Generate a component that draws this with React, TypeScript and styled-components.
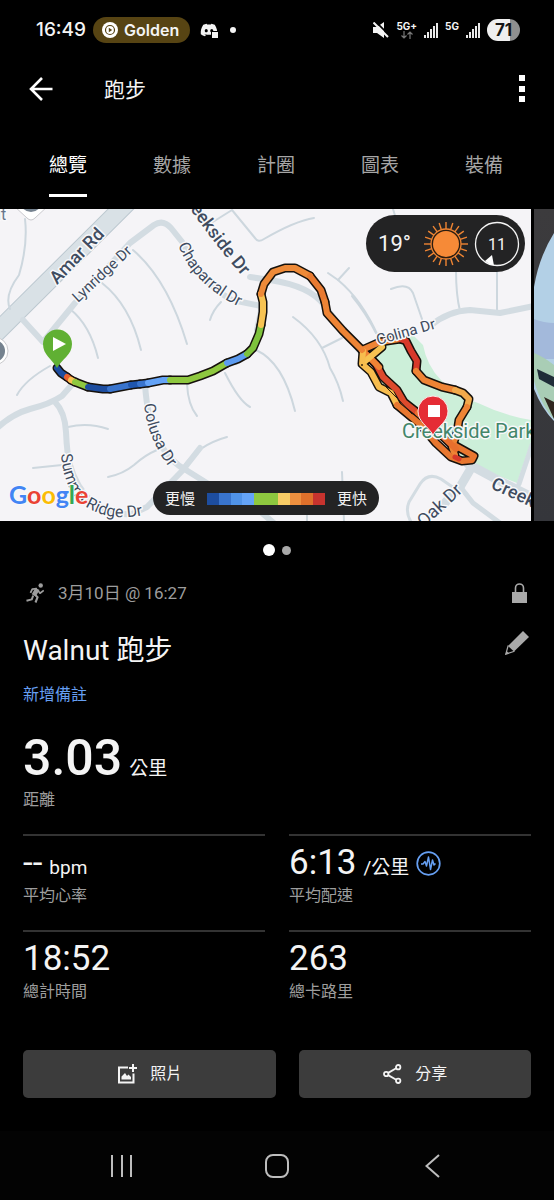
import React from "react";
import styled, { createGlobalStyle } from "styled-components";
import { FaDiscord } from "react-icons/fa";

const GlobalStyle = createGlobalStyle`
  *, *::before, *::after { box-sizing: border-box; }
  body {
    margin: 0;
    background: #000;
    color: #f4f4f4;
    font-family: Roboto, "Noto Sans CJK TC", sans-serif;
  }
  button { font-family: inherit; }
`;

const Page = styled.div`
  min-height: 100vh;
  display: flex;
  flex-direction: column;
  background: #000;
`;

/* Status bar */
const StatusBar = styled.div`
  height: 60px;
  padding: 0 34px 0 36px;
  display: flex;
  align-items: center;
  justify-content: space-between;
  font-family: Inter, sans-serif;
`;
const StatusGroup = styled.div<{ $gap: number }>`
  display: flex;
  align-items: center;
  gap: ${(p) => p.$gap}px;
`;
const Clock = styled.span`
  font-size: 19px;
  font-weight: 500;
  line-height: 24px;
`;
const NowPill = styled.span`
  height: 26px;
  padding: 0 11px 0 9px;
  margin-right: 3px;
  display: flex;
  align-items: center;
  gap: 6px;
  border-radius: 13px;
  background: #574413;
  font-size: 16px;
  font-weight: 600;
`;
const NoticeIcon = styled.span`
  position: relative;
  display: flex;
  margin-right: 5px;
`;
const NoticeBadge = styled.span`
  position: absolute;
  right: -1px;
  bottom: 0;
  width: 8px;
  height: 8px;
  background: #f4f4f4;
  border: 1px solid #000;
`;
const Dot = styled.span<{ $size: number; $color: string }>`
  width: ${(p) => p.$size}px;
  height: ${(p) => p.$size}px;
  border-radius: 50%;
  background: ${(p) => p.$color};
`;
const Network = styled.span`
  height: 18px;
  display: flex;
  flex-direction: column;
  align-items: center;
  font-size: 10px;
  line-height: 10px;
  font-weight: 700;
`;
const Battery = styled.span`
  width: 33px;
  height: 22px;
  display: flex;
  align-items: center;
  justify-content: center;
  border-radius: 11px;
  background: linear-gradient(90deg, #efefef 71%, #8f8f8f 71%);
  color: #151515;
  font-size: 17px;
  font-weight: 700;
`;

/* Header and tabs */
const Header = styled.header`
  height: 58px;
  padding: 0 22px 0 23px;
  display: flex;
  align-items: center;
`;
const IconButton = styled.button`
  padding: 0;
  border: 0;
  background: none;
  color: inherit;
  display: flex;
  align-items: center;
  justify-content: center;
  cursor: pointer;
`;
const BackButton = styled(IconButton)`
  width: 36px;
  height: 40px;
`;
const MenuButton = styled(IconButton)`
  width: 20px;
  height: 40px;
`;
const ScreenTitle = styled.h1`
  margin: 0 0 0 45px;
  padding-top: 2px;
  flex: 1;
  font-size: 21px;
  line-height: 30px;
  font-weight: 400;
`;
const Tabs = styled.nav`
  height: 91px;
  padding: 12px 18px 12px 16px;
  display: flex;
  justify-content: space-around;
`;
const TabCell = styled.div`
  flex: 1;
  display: flex;
  justify-content: center;
`;
const Tab = styled.button<{ $active?: boolean }>`
  padding: 7px 0 0;
  border: 0;
  border-bottom: 3px solid ${(p) => (p.$active ? "#fff" : "transparent")};
  background: none;
  color: ${(p) => (p.$active ? "#fff" : "#a6a6a6")};
  font-size: 19px;
  line-height: 28px;
  cursor: pointer;
`;

/* Carousel */
const Carousel = styled.div`
  height: 312px;
  display: flex;
  gap: 3px;
  overflow: hidden;
`;
const MapSlide = styled.div`
  position: relative;
  flex: 1;
  min-width: 0;
  background: #f5f4f7;
  & > svg { display: block; }
`;
const PhotoSlide = styled.div`
  flex: 0 0 20px;
  & > svg { display: block; }
`;
const WeatherPill = styled.div`
  position: absolute;
  top: 6px;
  right: 6px;
  height: 57px;
  padding: 0 5px 0 12px;
  display: flex;
  align-items: center;
  border-radius: 29px;
  background: #232324;
  font-size: 22px;
  gap: 12px;
`;
const WeatherIcons = styled.div`
  display: flex;
  align-items: center;
  gap: 5px;
`;
const PaceLegend = styled.div`
  position: absolute;
  left: 153px;
  bottom: 6px;
  height: 34px;
  padding: 2px 12px 0;
  display: flex;
  align-items: center;
  gap: 12px;
  border-radius: 17px;
  background: #232324;
  font-size: 15px;
  line-height: 20px;
`;
const Scale = styled.div`
  width: 118px;
  height: 12px;
  display: flex;
`;
const ScaleStep = styled.span<{ $color: string }>`
  flex: 1;
  background: ${(p) => p.$color};
`;
const Pager = styled.div`
  height: 58px;
  display: flex;
  align-items: center;
  justify-content: center;
  gap: 7px;
`;

/* Summary */
const Summary = styled.main`
  padding: 0 23px;
`;
const Row = styled.div`
  display: flex;
  justify-content: space-between;
`;
const DateRow = styled(Row)`
  height: 28px;
  padding: 0 4px 0 3px;
  align-items: center;
  color: #9d9d9d;
`;
const DateLabel = styled.span`
  display: flex;
  align-items: center;
  gap: 14px;
  font-size: 17px;
  line-height: 28px;
`;
const TitleRow = styled(Row)`
  margin-top: 24px;
  padding-right: 2px;
  align-items: flex-start;
  color: #a9a9a9;
`;
const ActivityTitle = styled.h2`
  margin: 0;
  color: #f4f4f4;
  font-size: 28px;
  line-height: 40px;
  font-weight: 400;
`;
const NoteLink = styled.a`
  display: block;
  width: fit-content;
  margin-top: 12px;
  color: #669ff2;
  font-size: 16px;
  line-height: 24px;
  text-decoration: none;
`;
const Distance = styled.div`
  margin-top: 21px;
`;
const Value = styled.div<{ $large?: boolean }>`
  height: ${(p) => (p.$large ? 60 : 46)}px;
  display: flex;
  align-items: baseline;
  gap: 7px;
  font-size: ${(p) => (p.$large ? 50 : 35)}px;
  line-height: ${(p) => (p.$large ? 60 : 46)}px;
  font-weight: ${(p) => (p.$large ? 500 : 400)};
`;
const Unit = styled.span`
  font-size: 19px;
  line-height: 24px;
  font-weight: 400;
`;
const PaceBadge = styled.span`
  align-self: center;
  display: flex;
`;
const Label = styled.div<{ $tall?: boolean }>`
  color: #9d9d9d;
  font-size: 16px;
  line-height: ${(p) => (p.$tall ? 24 : 20)}px;
`;
const Stats = styled.div`
  margin-top: 22px;
  display: grid;
  grid-template-columns: 1fr 1fr;
  column-gap: 24px;
`;
const Stat = styled.div`
  padding: 4px 0 24px;
  border-top: 2px solid #333;
`;
const Actions = styled.div`
  margin: 24px 0;
  display: flex;
  gap: 23px;
`;
const ActionButton = styled.button<{ $grow: number }>`
  flex: ${(p) => p.$grow} 1 0;
  height: 48px;
  border: 0;
  border-radius: 5px;
  background: #3c3c3c;
  color: #f4f4f4;
  display: flex;
  align-items: center;
  justify-content: center;
  gap: 13px;
  font-size: 16px;
  line-height: 24px;
  cursor: pointer;
`;
const SystemNav = styled.div`
  margin-top: auto;
  height: 69px;
  padding: 0 44px;
  display: flex;
  align-items: center;
  background: #030303;
  color: #bdbdbd;
`;
const NavButton = styled(IconButton)`
  flex: 1;
  height: 48px;
`;

const paceColors = [
  "#1d4d9f", "#3974cd", "#5093e8", "#64a3f7", "#8ec83f",
  "#8ec83f", "#f8cc66", "#ee903f", "#df702b", "#c7332e",
];

const wideRoads = [
  "M-4 429Q12 414 30 409Q50 404 62 396L76 380",
  "M55 402Q65 412 66 432Q67 455 70 465Q76 487 92 502Q112 516 132 514L147 507L182 471L200 448",
  "M145 384Q147 418 158 440Q170 462 186 470L210 485L250 503L275 524",
  "M23 320L43 342L75 303L130 243L154 225Q163 219 171 228L183 243Q196 280 232 300L261 306",
  "M250 277L270 280Q310 286 324 305L340 326L362 354",
  "M262 306Q260 350 236 362",
  "M262 306L257 330",
];

const thinRoads = [
  "M25 219Q28 245 19 275Q4 295 10 309",
  "M70 309Q90 325 98 358",
  "M102 283Q130 305 141 350",
  "M133 250Q168 280 187 344",
  "M208 225L232 210L255 238Q258 243 264 239Q295 221 314 218",
  "M210 320Q213 310 221 302",
  "M328 273L338 280Q362 300 378 336",
  "M338 280L349 268",
  "M293 317Q322 338 330 368Q339 383 343 401",
  "M322 348L342 338",
  "M256 350Q283 362 295 411",
  "M225 373Q239 401 250 407",
  "M187 384Q188 405 197 416",
  "M227 437Q198 445 183 467",
  "M342 472L344 521",
  "M307 515V522",
  "M50 366Q25 380 17 395",
  "M68 427Q88 422 108 429",
  "M33 468L62 465",
  "M108 477Q123 474 134 465Q145 455 157 450",
  "M456 270Q456 295 460 311",
  "M497 270V312",
  "M391 289Q408 282 413 293L422 319",
  "M393 209L397 222",
  "M352 296Q366 313 376 333",
];

type Segment = { d: string; color: string };

const route: Segment[] = [
  { d: "M363 351L376 364L383 377L397 390L404 402L418 413", color: "#dd4a2c" },
  { d: "M363 351L379 367", color: "#ee8435" },
  { d: "M362 350L380 342L400 339", color: "#ee8435" },
  { d: "M363 363L382 347", color: "#f7c352" },
  { d: "M400 339L406 341L411 351L417 361L416 371", color: "#d7392a" },
  { d: "M416 371L424 380L442 387L455 390", color: "#ee8435" },
  { d: "M455 390L463 393L469 399L467 407", color: "#f2aa4b" },
  { d: "M467 407L459 420L457 433L452 447L455 455", color: "#ee8435" },
  { d: "M363 351L362 364L371 372L379 387L391 393L397 405", color: "#f7bd4e" },
  { d: "M397 405L421 425L436 443L451 457L462 461L472 460L474 456L465 451L456 446", color: "#e8772f" },
  { d: "M418 413L434 428L456 449", color: "#e86f2d" },
  { d: "M57 368L61 373L67 377", color: "#1d4d9f" },
  { d: "M67 377L71 380", color: "#e8602d" },
  { d: "M71 380L75 382", color: "#f7c352" },
  { d: "M75 382L88 387", color: "#8ec83f" },
  { d: "M88 387L103 389L110 389", color: "#1d4d9f" },
  { d: "M110 389L131 385", color: "#3974cd" },
  { d: "M131 385L140 384", color: "#1f56ae" },
  { d: "M140 384L148 383", color: "#3974cd" },
  { d: "M148 383L163 380L170 380", color: "#64a3f7" },
  { d: "M170 380L188 380L200 376L213 371L227 363", color: "#8ec83f" },
  { d: "M227 363L238 359L247 354", color: "#5c9bf0" },
  { d: "M247 354L253 348L259 334L261 325", color: "#7ec23c" },
  { d: "M261 325L263 312L263 302L261 294", color: "#f7c352" },
  { d: "M261 294L264 284L273 272L285 268L295 268L310 276", color: "#ee8a38" },
  { d: "M310 276L321 290L325 302", color: "#e87a31" },
  { d: "M325 302L327 313L343 331L362 350", color: "#ee8435" },
];

function RouteMap() {
  return (
    <svg width="100%" height="312" viewBox="0 209 531 312" preserveAspectRatio="xMidYMid slice" role="img" aria-label="路線地圖">
      <defs>
        <path id="creek-top" d="M168 176Q204 232 242 276" />
        <path id="chaparral" d="M178 245Q194 287 246 310" />
        <path id="colusa" d="M144 404Q147 440 174 474" />
        <path id="summit" d="M61 452C62 478 72 500 90 509Q115 524 156 512" />
        <path id="creek-bottom" d="M490 488L600 539" />
      </defs>
      <rect y="209" width="531" height="312" fill="#f5f4f7" />
      <path d="M366 352L388 342L412 334L423 345Q427 366 441 380Q456 397 478 403Q505 416 531 420V442L517 483L474 466L440 440L385 390Z" fill="#ccefd9" />
      <g fill="none" strokeLinecap="round" strokeLinejoin="round">
        <path d="M-10 339L135 195" stroke="#bcc8d0" strokeWidth="19" />
        <path d="M-10 339L135 195" stroke="#d9e1e6" strokeWidth="17" />
        <g stroke="#cdd7de" strokeWidth="2">
          {thinRoads.map((d) => <path key={d} d={d} />)}
        </g>
        <g stroke="#d3dce2" strokeWidth="6">
          {wideRoads.map((d) => <path key={d} d={d} />)}
          <path d="M430 326Q448 311 470 310L500 313L534 306" />
        </g>
        <path d="M468 464L494 478L534 498" stroke="#d3dce2" strokeWidth="9" />
        <path d="M470 470L460 487L440 508" stroke="#d3dce2" strokeWidth="9" />
        <path d="M462 489L473 503L500 523" stroke="#d3dce2" strokeWidth="5" />
        <path d="M532 445L519 484" stroke="#d3dce2" strokeWidth="5" />
        <path d="M454 488L441 479Q428 472 420 484L409 502Q405 512 411 522" stroke="#d3dce2" strokeWidth="3" />
      </g>

      <g fill="#3f4c60" stroke="#f8f8fa" strokeWidth="3" strokeLinejoin="round" paintOrder="stroke" fontFamily="Roboto, sans-serif">
        <text x="0" y="0" transform="translate(57 285) rotate(-46)" fontSize="18" fontWeight="500">Amar Rd</text>
        <text x="0" y="0" transform="translate(78 303) rotate(-43)" fontSize="15">Lynridge Dr</text>
        <text fontSize="18" fontWeight="500"><textPath href="#creek-top" startOffset="100%" textAnchor="end">Creekside Dr</textPath></text>
        <text fontSize="16"><textPath href="#chaparral">Chaparral Dr</textPath></text>
        <text fontSize="16"><textPath href="#colusa">Colusa Dr</textPath></text>
        <text fontSize="16"><textPath href="#summit" startOffset="2">Summit Ridge Dr</textPath></text>
        <text fontSize="18" fontWeight="500"><textPath href="#creek-bottom">Creekside Dr</textPath></text>
        <text x="0" y="0" transform="translate(424 528) rotate(-43)" fontSize="18">Oak Dr</text>
        <text x="-3" y="220" fontSize="16" fill="#66758a">it</text>
      </g>

      <g fill="none" strokeLinecap="round" strokeLinejoin="round">
        <g stroke="#16110c" strokeWidth="9">
          {route.map((s) => <path key={s.d} d={s.d} />)}
        </g>
        <g strokeWidth="6">
          {route.map((s) => <path key={s.d} d={s.d} stroke={s.color} />)}
        </g>
        <path d="M455 457L459 459" stroke="#d7392a" strokeWidth="5" />
        <path d="M384 385L397 398L412 414" stroke="#2a1a10" strokeWidth="1" />
      </g>
      <circle cx="362" cy="365" r="1" fill="#3b2a10" />

      <g stroke="#f8f8fa" strokeWidth="3" strokeLinejoin="round" paintOrder="stroke" fontFamily="Roboto, sans-serif">
        <text x="0" y="0" transform="translate(378 345) rotate(-16)" fontSize="15" fill="#3f4c60">Colina Dr</text>
        <text x="402" y="438" fontSize="20" fill="#43866a">Creekside Park</text>
      </g>

      <path d="M13 205L27 218Q31 222 35 218L49 205Z" fill="#fff" stroke="#c9c9cd" />
      <circle cx="31" cy="201" r="11" fill="#75828f" />
      <circle cx="-6" cy="351" r="14" fill="#fff" stroke="#c9c9cd" />
      <circle cx="-6" cy="351" r="11" fill="#75828f" />

      <path d="M57 368C52 359 43 355 43 344A14 14 0 0 1 72 344C72 355 62 359 57 368Z" fill="#60b033" />
      <path d="M53 337L66 344L53 351Z" fill="#fff" />
      <path d="M433 435C428 426 418 422 418 411A15 15 0 0 1 448 411C448 422 438 426 433 435Z" fill="#e52c35" stroke="#fbe9e9" strokeWidth="1" />
      <rect x="428" y="405" width="12" height="12" fill="#fff" />

      <text x="9" y="504" fontFamily="Lato, sans-serif" fontSize="25" fontWeight="700" stroke="#f8f8fa" strokeWidth="2" paintOrder="stroke">
        <tspan fill="#4285f4">G</tspan>
        <tspan fill="#ea4335">o</tspan>
        <tspan fill="#fbbc05">o</tspan>
        <tspan fill="#4285f4">g</tspan>
        <tspan fill="#34a853">l</tspan>
        <tspan fill="#ea4335">e</tspan>
      </text>
    </svg>
  );
}

function PhotoPeek() {
  return (
    <svg width="20" height="312" viewBox="0 0 20 312" aria-hidden="true">
      <defs>
        <linearGradient id="wall" x1="0" y1="0" x2="0" y2="1">
          <stop offset="0" stopColor="#3c3b3d" />
          <stop offset="1" stopColor="#35363b" />
        </linearGradient>
      </defs>
      <rect width="20" height="312" fill="url(#wall)" />
      <path d="M20 24Q5 48 0 78V180Q8 200 20 212Z" fill="#b3d0e6" />
      <path d="M0 110Q10 114 20 114V150H0Z" fill="#a3b9db" />
      <path d="M0 144Q10 148 20 156V210Q8 198 0 172Z" fill="#a9cdb5" />
      <path d="M3 160L20 168V178L5 170Z" fill="#1f2c38" />
      <path d="M10 188L20 193V210Z" fill="#30261f" />
    </svg>
  );
}

function SignalBars() {
  return (
    <svg width="14" height="15" viewBox="0 0 14 15" fill="#e8e8e8" aria-hidden="true">
      <rect x="0" y="12" width="2" height="3" />
      <rect x="3" y="9" width="2" height="6" />
      <rect x="6" y="6" width="2" height="9" />
      <rect x="9" y="3" width="2" height="12" />
      <rect x="12" y="0" width="2" height="15" />
    </svg>
  );
}

function Sun() {
  const rays = Array.from({ length: 20 }, (_, i) => i * 18);
  return (
    <svg width="46" height="46" viewBox="-23 -23 46 46" aria-label="晴">
      <g stroke="#ef8533" strokeWidth="1.4">
        {rays.map((a) => <path key={a} d="M0 -15V-22" transform={`rotate(${a})`} />)}
      </g>
      <circle r="15" fill="#2a1c10" stroke="#ef8533" strokeWidth="1.3" />
      <circle r="13" fill="#f68a37" />
    </svg>
  );
}

function Wind() {
  return (
    <svg width="46" height="46" viewBox="-23 -23 46 46" aria-label="風速 11">
      <circle r="21.5" fill="none" stroke="#f4f4f4" strokeWidth="1.3" />
      <path d="M-12 17L-5 11L-3 21.5Q-8 20.500 -12 17Z" fill="#fff" />
      <text y="6" fontSize="16" fill="#f4f4f4" textAnchor="middle" fontFamily="Roboto, sans-serif">11</text>
    </svg>
  );
}

function Runner() {
  return (
    <svg width="18" height="20" viewBox="0 0 18 20" fill="none" stroke="currentColor" strokeLinejoin="round" aria-hidden="true">
      <circle cx="14.700" cy="2.500" r="2.200" fill="currentColor" stroke="none" />
      <path d="M4.500 9.800L6.300 6.200L11 5.600" strokeWidth="1.800" />
      <path d="M11.400 5.800L7.800 12.400" strokeWidth="4.600" />
      <path d="M12 7.500L14 10.200L17.800 7.400" strokeWidth="1.700" />
      <path d="M8.800 11.500L11.600 14.200L9.500 19.500" strokeWidth="2.100" />
      <path d="M7.200 12.500L5.800 16.400L0.500 17.800" strokeWidth="2" />
    </svg>
  );
}

const tabs = ["總覽", "數據", "計圈", "圖表", "裝備"];

export default function App() {
  return (
    <Page>
      <GlobalStyle />
      <StatusBar>
        <StatusGroup $gap={7}>
          <Clock>16:49</Clock>
          <NowPill>
            <svg width="16" height="16" viewBox="0 0 16 16" aria-hidden="true">
              <circle cx="8" cy="8" r="8" fill="#fff" />
              <circle cx="8" cy="8" r="4.500" fill="none" stroke="#574413" strokeWidth="1.200" />
              <path d="M6.800 5.800L10.200 8L6.800 10.200Z" fill="#574413" />
            </svg>
            Golden
          </NowPill>
          <NoticeIcon>
            <FaDiscord size={18} />
            <NoticeBadge />
          </NoticeIcon>
          <Dot $size={6} $color="#f4f4f4" />
        </StatusGroup>
        <StatusGroup $gap={7}>
          <svg width="16" height="17" viewBox="0 0 16 17" aria-label="靜音">
            <path d="M0 5H4L11 0V16L4 11H0Z" fill="#f4f4f4" />
            <path d="M2 -1L17 14" stroke="#000" strokeWidth="1.800" />
            <path d="M0.500 0.500L15 15" stroke="#f4f4f4" strokeWidth="2" />
          </svg>
          <Network>
            5G+
            <svg width="12" height="8" viewBox="0 0 12 8" fill="none" stroke="#777" strokeWidth="1.200" aria-hidden="true">
              <path d="M3 0V7M0.500 4.500L3 7L5.500 4.500M9 8V1M6.500 3.500L9 1L11.500 3.500" />
            </svg>
          </Network>
          <SignalBars />
          <Network>5G</Network>
          <SignalBars />
          <Battery>71</Battery>
        </StatusGroup>
      </StatusBar>

      <Header>
        <BackButton aria-label="返回">
          <svg width="24" height="24" viewBox="0 0 24 24" fill="none" stroke="#fff" strokeWidth="2.600" aria-hidden="true">
            <path d="M23.500 12H2M13 1L2 12L13 23" />
          </svg>
        </BackButton>
        <ScreenTitle>跑步</ScreenTitle>
        <MenuButton aria-label="更多">
          <svg width="6" height="28" viewBox="0 0 6 28" fill="#fff" aria-hidden="true">
            <rect width="6" height="6" y="0" />
            <rect width="6" height="6" y="11" />
            <rect width="6" height="6" y="21" />
          </svg>
        </MenuButton>
      </Header>

      <Tabs>
        {tabs.map((name, i) => (
          <TabCell key={name}>
            <Tab $active={i === 0}>{name}</Tab>
          </TabCell>
        ))}
      </Tabs>

      <Carousel>
        <MapSlide>
          <RouteMap />
          <WeatherPill>
            19°
            <WeatherIcons>
              <Sun />
              <Wind />
            </WeatherIcons>
          </WeatherPill>
          <PaceLegend>
            <span>更慢</span>
            <Scale>
              {paceColors.map((c, i) => <ScaleStep key={i} $color={c} />)}
            </Scale>
            <span>更快</span>
          </PaceLegend>
        </MapSlide>
        <PhotoSlide>
          <PhotoPeek />
        </PhotoSlide>
      </Carousel>
      <Pager>
        <Dot $size={12} $color="#fff" />
        <Dot $size={9} $color="#a9a9a9" />
      </Pager>

      <Summary>
        <DateRow>
          <DateLabel>
            <Runner />
            3月10日 @ 16:27
          </DateLabel>
          <svg width="15" height="20" viewBox="0 0 15 20" aria-label="私人">
            <rect y="9" width="15" height="11" fill="#a9a9a9" />
            <path d="M3.500 9V5A4 4 0 0 1 11.500 5V9" fill="none" stroke="#a9a9a9" strokeWidth="1.600" />
          </svg>
        </DateRow>
        <TitleRow>
          <ActivityTitle>Walnut 跑步</ActivityTitle>
          <IconButton aria-label="編輯">
            <svg width="24" height="24" viewBox="0 0 24 24" fill="currentColor" aria-hidden="true">
              <path d="M18 0L24 6L9 20.500L3 15Z" />
              <path d="M3.200 14.500L0.800 23.200L9.500 20.200" fill="none" stroke="currentColor" strokeWidth="1.200" />
              <path d="M0.500 23.500L1.500 20L4 22.300Z" />
            </svg>
          </IconButton>
        </TitleRow>
        <NoteLink href="#note">新增備註</NoteLink>

        <Distance>
          <Value $large>3.03<Unit>公里</Unit></Value>
          <Label $tall>距離</Label>
        </Distance>

        <Stats>
          <Stat>
            <Value>--<Unit>bpm</Unit></Value>
            <Label>平均心率</Label>
          </Stat>
          <Stat>
            <Value>
              6:13
              <Unit>/公里</Unit>
              <PaceBadge>
                <svg width="25" height="25" viewBox="0 0 25 25" fill="none" stroke="#669ff2" strokeLinejoin="round" aria-hidden="true">
                  <circle cx="12.500" cy="12.500" r="11.300" strokeWidth="1.700" />
                  <path d="M5 13H7L9 10.500L10.500 15L12.500 6L14.500 18.500L16.500 9L18 14L19.500 12.500" strokeWidth="1.500" />
                </svg>
              </PaceBadge>
            </Value>
            <Label>平均配速</Label>
          </Stat>
          <Stat>
            <Value>18:52</Value>
            <Label>總計時間</Label>
          </Stat>
          <Stat>
            <Value>263</Value>
            <Label>總卡路里</Label>
          </Stat>
        </Stats>

        <Actions>
          <ActionButton $grow={11}>
            <svg width="20" height="20" viewBox="0 0 20 20" aria-hidden="true">
              <path d="M11 3.500H2V18.500H16.500V9.500" fill="none" stroke="#f4f4f4" strokeWidth="2" />
              <path d="M16 0V8M12 4H20" stroke="#f4f4f4" strokeWidth="2" />
              <path d="M4.500 15.500V12.500L8 9L10 12L11.500 10.500L14 13V15.500Z" fill="#f4f4f4" />
            </svg>
            照片
          </ActionButton>
          <ActionButton $grow={10}>
            <svg width="19" height="20" viewBox="0 0 19 20" fill="none" stroke="#f4f4f4" strokeWidth="1.800" aria-hidden="true">
              <circle cx="3.200" cy="10" r="2.200" />
              <circle cx="15.200" cy="3.200" r="2.200" />
              <circle cx="15.200" cy="16.800" r="2.200" />
              <path d="M5.200 8.900L13.200 4.300M5.200 11.100L13.200 15.700" />
            </svg>
            分享
          </ActionButton>
        </Actions>
      </Summary>

      <SystemNav>
        <NavButton aria-label="最近使用">
          <svg width="22" height="22" viewBox="0 0 22 22" fill="currentColor" aria-hidden="true">
            <rect x="0" width="2" height="22" />
            <rect x="10" width="2" height="22" />
            <rect x="19" width="2" height="22" />
          </svg>
        </NavButton>
        <NavButton aria-label="主畫面">
          <svg width="24" height="24" viewBox="0 0 24 24" fill="none" stroke="currentColor" strokeWidth="2" aria-hidden="true">
            <rect x="1" y="1" width="22" height="22" rx="7" />
          </svg>
        </NavButton>
        <NavButton aria-label="返回上一頁">
          <svg width="15" height="24" viewBox="0 0 15 24" fill="none" stroke="currentColor" strokeWidth="2" aria-hidden="true">
            <path d="M14 1L1.500 12L14 23" />
          </svg>
        </NavButton>
      </SystemNav>
    </Page>
  );
}
